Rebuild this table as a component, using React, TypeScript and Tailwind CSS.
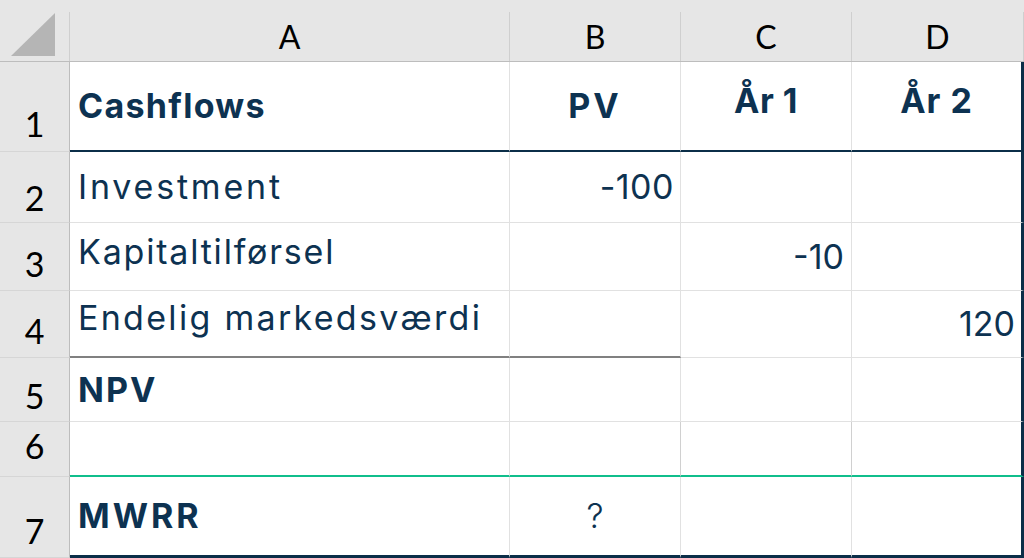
import React from 'react';

// spreadsheet screenshot: header row + 7 rows, columns A-D
const navy = 'text-[#0d3251]';

type CellProps = {
    children?: React.ReactNode;
    className?: string;
};

const Cell: React.FC<CellProps> = ({ children, className = '' }) => (
    <div className={`flex items-center border-r border-b border-[#e1e1e1] bg-white ${className}`}>
        {children}
    </div>
);

const ColHead: React.FC<{ label?: string; corner?: boolean }> = ({ label, corner }) => (
    <div className="bg-[#e6e6e6] border-b border-[#bdbdbd] pt-[12px]">
        <div className="h-full border-r border-[#cfcfcf] flex items-center justify-center text-[32px] leading-none text-black font-['Lato',sans-serif]">
            {corner ? (
                <svg width="44" height="43" viewBox="0 0 44 43" className="mr-[3px] mb-[4px]">
                    <polygon points="44,0 44,43 0,43" fill="#b5b5b5" />
                </svg>
            ) : (
                label
            )}
        </div>
    </div>
);

const RowHead: React.FC<{ n: number; pb: string }> = ({ n, pb }) => (
    <div className={`bg-[#e6e6e6] border-r border-[#bdbdbd] border-b border-b-[#d6d6d6] flex items-end justify-center text-[34px] leading-none text-black font-['Lato',sans-serif] ${pb}`}>
        {n}
    </div>
);

export default function App() {
    return (
        <div className={`w-[1024px] h-[558px] overflow-hidden bg-white font-['Inter',sans-serif] text-[34px] leading-none ${navy}`}>
            <div className="grid grid-cols-[70px_440px_171px_171px_172px] grid-rows-[62px_90px_71px_68px_67px_64px_55px_81px] h-full">
                {/* header */}
                <ColHead corner />
                <ColHead label="A" />
                <ColHead label="B" />
                <ColHead label="C" />
                <ColHead label="D" />

                {/* row 1 */}
                <RowHead n={1} pb="pb-[10px]" />
                <Cell className="px-[8px] font-bold tracking-[1.3px] border-b-2 border-b-[#0b2e48]">Cashflows</Cell>
                <Cell className="justify-center font-bold tracking-[3px] border-b-2 border-b-[#0b2e48]">PV</Cell>
                <Cell className="justify-center font-bold tracking-[0.5px] pb-[10px] border-b-2 border-b-[#0b2e48]">År 1</Cell>
                <Cell className="justify-center font-bold tracking-[1px] pb-[10px] border-b-2 border-b-[#0b2e48] border-r-[3px] border-r-[#0b2e48]">År 2</Cell>

                {/* row 2 */}
                <RowHead n={2} pb="pb-[7px]" />
                <Cell className="px-[8px] tracking-[2.8px]">Investment</Cell>
                <Cell className="justify-end pr-[6px] tracking-[0.5px]">-100</Cell>
                <Cell />
                <Cell className="border-r-[3px] border-r-[#0b2e48]" />

                {/* row 3 */}
                <RowHead n={3} pb="pb-[9px]" />
                <Cell className="px-[8px] pb-[10px] tracking-[1.8px]">Kapitaltilførsel</Cell>
                <Cell />
                <Cell className="justify-end pr-[7px]">-10</Cell>
                <Cell className="border-r-[3px] border-r-[#0b2e48]" />

                {/* row 4 */}
                <RowHead n={4} pb="pb-[9px]" />
                <Cell className="px-[8px] pb-[12px] tracking-[2.3px] border-b-2 border-b-[#808080]">Endelig markedsværdi</Cell>
                <Cell className="border-b-2 border-b-[#808080]" />
                <Cell />
                <Cell className="justify-end pr-[6px] border-r-[3px] border-r-[#0b2e48]">120</Cell>

                {/* row 5 */}
                <RowHead n={5} pb="pb-[8px]" />
                <Cell className="px-[8px] font-bold tracking-[2px]">NPV</Cell>
                <Cell />
                <Cell />
                <Cell className="border-r-[3px] border-r-[#0b2e48]" />

                {/* row 6 */}
                <RowHead n={6} pb="pb-[13px]" />
                <Cell className="border-b-2 border-b-[#10be8c]" />
                <Cell className="border-b-2 border-b-[#10be8c] border-r-[#d0d0d0]" />
                <Cell className="border-b-2 border-b-[#10be8c] border-r-[#d0d0d0]" />
                <Cell className="border-b-2 border-b-[#10be8c] border-r-[3px] border-r-[#0b2e48]" />

                {/* row 7 */}
                <RowHead n={7} pb="pb-[9px]" />
                <Cell className="px-[8px] font-bold tracking-[3px] border-b-[3px] border-b-[#0b2e48]">MWRR</Cell>
                <Cell className="justify-center font-light border-b-[3px] border-b-[#0b2e48]">?</Cell>
                <Cell className="border-b-[3px] border-b-[#0b2e48]" />
                <Cell className="border-b-[3px] border-b-[#0b2e48] border-r-[3px] border-r-[#0b2e48]" />
            </div>
        </div>
    );
}
